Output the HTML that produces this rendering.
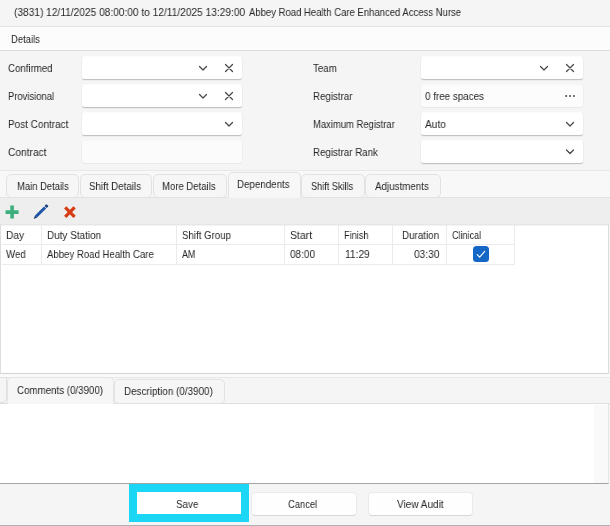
<!DOCTYPE html>
<html><head><meta charset="utf-8">
<style>
*{box-sizing:border-box;margin:0;padding:0}
html,body{width:610px;height:526px;overflow:hidden;background:#f5f5f5}
body{font-family:"Liberation Sans",sans-serif;font-size:11px;color:#262626;position:relative}
.abs{position:absolute}
.t{position:absolute;white-space:pre;line-height:14px;height:14px;transform-origin:0 0;will-change:transform}
.inp{position:absolute;height:24px;width:164px;background:#fff;border:1px solid #ededed;border-top-color:#fbfbfb;border-bottom:1px solid #c2c2c2;box-shadow:0 1px 1px rgba(0,0,0,0.035);border-radius:4px}
.inp.dis{background:#fbfbfb;border-color:#efefef;border-top-color:#f7f7f7;border-bottom-color:#e9e9e9;box-shadow:none}
.tab{position:absolute;top:173.500px;height:24.500px;background:#f6f6f6;border:1px solid #e2e2e2;border-radius:5px}
.tab.act{background:#f7f7f7;top:172px;height:27px;border-bottom:none;border-radius:5px 5px 0 0}
.btn{position:absolute;top:492px;height:24px;width:105px;background:#fefefe;border:1px solid #eaeaea;border-bottom-color:#d6d6d6;border-radius:4px}
.vl{position:absolute;width:1px;background:#ebebeb;top:225px;height:39px}
svg{position:absolute;overflow:visible;left:0;top:0}
</style></head><body>
<!-- title + details bars -->
<div class="abs" style="left:0;top:0;width:610px;height:27px;background:#f5f5f5;border-bottom:1px solid #e4e4e4"></div>
<div class="abs" style="left:0;top:27px;width:610px;height:24px;background:#fdfcfd;border-bottom:1px solid #dcdcdc"></div>
<div class="abs" style="left:0;top:51px;width:610px;height:119px;background:#f5f5f5"></div>

<!-- inputs -->
<div class="inp" style="left:81px;top:56px;width:162px"></div>
<div class="inp" style="left:81px;top:84px;width:162px"></div>
<div class="inp" style="left:81px;top:112px;width:162px"></div>
<div class="inp dis" style="left:81px;top:140px;width:162px"></div>
<div class="inp" style="left:420px;top:56px"></div>
<div class="inp dis" style="left:420px;top:84px;background:#fcfcfc"></div>
<div class="inp" style="left:420px;top:112px"></div>
<div class="inp" style="left:420px;top:140px"></div>

<!-- chevrons, x, dots -->
<svg width="610" height="526" fill="none" stroke="#484848" stroke-width="1.250" stroke-linecap="round" stroke-linejoin="round">
<path d="M199.500 66.500l3.500 3.500 3.500-3.500"/>
<path d="M199.500 94.500l3.500 3.500 3.500-3.500"/>
<path d="M225.500 122.500l3.500 3.500 3.500-3.500"/>
<path d="M540.500 66.500l3.500 3.500 3.500-3.500"/>
<path d="M566.500 122.500l3.500 3.500 3.500-3.500"/>
<path d="M566.500 150l3.500 3.500 3.500-3.500"/>
<path d="M225.500 64.500l7 7M232.500 64.500l-7 7"/>
<path d="M225.500 92.500l7 7M232.500 92.500l-7 7"/>
<path d="M566.500 64.500l7 7M573.500 64.500l-7 7"/>
<g fill="#4a4a4a" stroke="none"><circle cx="566.200" cy="95.900" r="1"/><circle cx="570.100" cy="95.900" r="1"/><circle cx="574" cy="95.900" r="1"/></g>
</svg>

<!-- upper tab strip -->
<div class="abs" style="left:0;top:170px;width:610px;height:28px;background:#f8f8f8;border-top:1px solid #e8e8e8;border-bottom:1px solid #e4e4e4"></div>
<div class="tab" style="left:5.500px;width:73px"></div>
<div class="tab" style="left:79.500px;width:72px"></div>
<div class="tab" style="left:152.500px;width:74.500px"></div>
<div class="tab act" style="left:228px;width:72.500px"></div>
<div class="tab" style="left:301px;width:63.500px"></div>
<div class="tab" style="left:365.300px;width:76.200px"></div>

<!-- toolbar icons -->
<div class="abs" style="left:0;top:198px;width:610px;height:26px;background:#eeeeee"></div>
<svg width="610" height="526">
<path d="M12.100 205.600v13M5.600 212.100h13" stroke="#3bb07e" stroke-width="3.600" fill="none"/>
<path d="M33.700 218.900l1.300-3.420 2.120 2.120z" fill="#16396f"/>
<path d="M35 215.480l9.050-9.050 2.120 2.120-9.050 9.050z" fill="#1c54a6"/>
<path d="M44.550 205.930l1.500-1.500a0.500 0.500 0 0 1 0.700 0l1.420 1.420a0.500 0.500 0 0 1 0 0.700l-1.500 1.500z" fill="#173f80"/>
<path d="M65.200 207.400l9.400 9.400M74.600 207.400l-9.400 9.400" stroke="#d63b14" stroke-width="3.200" fill="none"/>
</svg>

<!-- grid -->
<div class="abs" style="left:0;top:224px;width:609px;height:151px;background:#fff;border:1px solid #dedede;border-top-color:#e6e6e6;border-bottom:2px solid #d2d2d2;box-shadow:inset 0 1px 0 #f4f4f4"></div>
<div class="abs" style="left:2px;top:244px;width:513px;height:1px;background:#ebebeb"></div>
<div class="abs" style="left:2px;top:264px;width:513px;height:1px;background:#ebebeb"></div>
<div class="vl" style="left:41px"></div>
<div class="vl" style="left:176px"></div>
<div class="vl" style="left:284px"></div>
<div class="vl" style="left:338px"></div>
<div class="vl" style="left:392px"></div>
<div class="vl" style="left:446px"></div>
<div class="vl" style="left:514px"></div>
<div class="abs" style="left:473px;top:246px;width:16px;height:16px;background:#1467c4;border-radius:3.500px"></div>
<svg width="610" height="526"><path d="M477.200 254.600l2.500 2.500 5-5.700" stroke="#fff" stroke-width="1.100" fill="none" stroke-linecap="round" stroke-linejoin="round"/></svg>

<!-- lower tab strip -->
<div class="abs" style="left:0;top:374px;width:610px;height:3px;background:#fafafa"></div>
<div class="abs" style="left:0;top:377px;width:610px;height:27px;background:#f5f5f5;border-top:1px solid #e8e8e8;border-bottom:1px solid #dedede"></div>
<div class="abs" style="left:-3px;top:377px;width:10px;height:26px;border:1px solid #e0e0e0;border-radius:0 0 5px 0;background:#f5f5f5"></div>
<div class="tab act" style="left:7px;width:107px;top:377px;height:27px;background:#f6f6f6;border-color:#e4e4e4"></div>
<div class="tab" style="left:113.500px;width:111px;top:379px;height:25px"></div>
<div class="abs" style="left:0;top:404px;width:609px;height:80px;background:#fff;border-bottom:1px solid #a4a4a4;border-right:1px solid #e6e6e6"></div>
<div class="abs" style="left:594px;top:405px;width:14px;height:78px;background:#f9f9f9"></div>

<!-- bottom -->
<div class="abs" style="left:0;top:484px;width:610px;height:42px;background:#f5f5f5;border-bottom:1px solid #b0b0b0"></div>
<div class="abs" style="left:129px;top:483.500px;width:119.500px;height:38px;background:#1bd6f4"></div>
<div class="abs" style="left:137px;top:492px;width:104px;height:21.500px;background:#fff"></div>
<div class="btn" style="left:251px;width:106px"></div>
<div class="btn" style="left:368px"></div>
<div class="t" style="left:14.3px;top:5px;transform:scaleX(0.923);">(3831) 12/11/2025 08:00:00 to 12/11/2025 13:29:00</div>
<div class="t" style="left:248.7px;top:5px;transform:scaleX(0.865);">Abbey Road Health Care Enhanced Access Nurse</div>
<div class="t" style="left:11.1px;top:32px;transform:scaleX(0.862);">Details</div>
<div class="t" style="left:8.2px;top:61px;transform:scaleX(0.879);">Confirmed</div>
<div class="t" style="left:8.2px;top:89px;transform:scaleX(0.857);">Provisional</div>
<div class="t" style="left:8.2px;top:117px;transform:scaleX(0.906);">Post Contract</div>
<div class="t" style="left:8.2px;top:145px;transform:scaleX(0.926);">Contract</div>
<div class="t" style="left:312.5px;top:61px;transform:scaleX(0.888);">Team</div>
<div class="t" style="left:312.5px;top:89px;transform:scaleX(0.885);">Registrar</div>
<div class="t" style="left:312.5px;top:117px;transform:scaleX(0.857);">Maximum Registrar</div>
<div class="t" style="left:312.5px;top:145px;transform:scaleX(0.885);">Registrar Rank</div>
<div class="t" style="left:425.2px;top:89px;transform:scaleX(0.892);">0 free spaces</div>
<div class="t" style="left:425.2px;top:117px;transform:scaleX(0.923);">Auto</div>
<div class="t" style="left:16.5px;top:179px;transform:scaleX(0.856);">Main Details</div>
<div class="t" style="left:89.2px;top:179px;transform:scaleX(0.886);">Shift Details</div>
<div class="t" style="left:162.1px;top:179px;transform:scaleX(0.868);">More Details</div>
<div class="t" style="left:236.8px;top:177px;transform:scaleX(0.887);">Dependents</div>
<div class="t" style="left:311.0px;top:179px;transform:scaleX(0.830);">Shift Skills</div>
<div class="t" style="left:375.3px;top:179px;transform:scaleX(0.889);">Adjustments</div>
<div class="t" style="left:6.1px;top:228px;transform:scaleX(0.925);">Day</div>
<div class="t" style="left:47.0px;top:228px;transform:scaleX(0.903);">Duty Station</div>
<div class="t" style="left:182.0px;top:228px;transform:scaleX(0.879);">Shift Group</div>
<div class="t" style="left:290.0px;top:228px;transform:scaleX(0.951);">Start</div>
<div class="t" style="left:344.3px;top:228px;transform:scaleX(0.835);">Finish</div>
<div class="t" style="left:401.5px;top:228px;transform:scaleX(0.892);">Duration</div>
<div class="t" style="left:452.3px;top:228px;transform:scaleX(0.818);">Clinical</div>
<div class="t" style="left:6.1px;top:247px;transform:scaleX(0.879);">Wed</div>
<div class="t" style="left:46.7px;top:247px;transform:scaleX(0.873);">Abbey Road Health Care</div>
<div class="t" style="left:181.8px;top:247px;transform:scaleX(0.812);">AM</div>
<div class="t" style="left:289.5px;top:247px;transform:scaleX(0.908);">08:00</div>
<div class="t" style="left:344.5px;top:247px;transform:scaleX(0.928);">11:29</div>
<div class="t" style="left:414.3px;top:247px;transform:scaleX(0.926);">03:30</div>
<div class="t" style="left:16.5px;top:383px;transform:scaleX(0.885);">Comments (0/3900)</div>
<div class="t" style="left:123.9px;top:384px;transform:scaleX(0.896);">Description (0/3900)</div>
<div class="t" style="left:175.6px;top:497px;transform:scaleX(0.893);">Save</div>
<div class="t" style="left:288.4px;top:497px;transform:scaleX(0.853);">Cancel</div>
<div class="t" style="left:397.0px;top:497px;transform:scaleX(0.911);">View Audit</div>
</body></html>
